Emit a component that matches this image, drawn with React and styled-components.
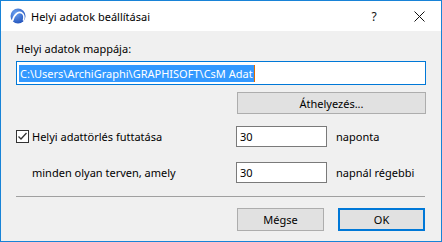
import React from "react";
import styled, { createGlobalStyle } from "styled-components";

const Global = createGlobalStyle`
  html, body { margin: 0; padding: 0; background: #ffffff; }
  * { box-sizing: border-box; }
`;

const font = `"Noto Sans", "Open Sans", sans-serif`;

const Window = styled.div`
  width: 442px;
  height: 242px;
  border: 1px solid #1883d7;
  display: flex;
  flex-direction: column;
  font-family: ${font};
  font-size: 11px;
  color: #000;
  overflow: hidden;
`;

const TitleBar = styled.div`
  height: 30px;
  background: #ffffff;
  display: flex;
  align-items: center;
  padding-left: 9px;
  flex-shrink: 0;
`;

const TitleText = styled.span`
  margin-left: 5px;
  font-size: 11px;
  color: #000;
  flex: 1;
`;

const TitleButton = styled.span`
  width: ${(p) => p.$w}px;
  display: flex;
  justify-content: center;
  align-items: center;
  font-size: 12px;
  color: #111;
`;

const Body = styled.div`
  flex: 1;
  background: #f0f0f0;
  padding: 10px 15px 0 15px;
  display: flex;
  flex-direction: column;
`;

const Label = styled.div`
  line-height: 15px;
  height: 15px;
  color: #000;
`;

const PathBox = styled.div`
  margin-top: 5px;
  height: 24px;
  border: 1px solid #0078d7;
  background: #fff;
  display: flex;
  align-items: center;
  padding-left: 2px;
`;

const Selected = styled.span`
  background: #3399ff;
  color: #fff;
  line-height: 17px;
  height: 17px;
  padding: 0 1px;
  white-space: nowrap;
  border-right: 1px solid #e06a00;
`;

const Button = styled.div`
  width: ${(p) => p.$w}px;
  height: ${(p) => p.$h}px;
  background: #e1e1e1;
  border: ${(p) => (p.$default ? "2px solid #0078d7" : "1px solid #adadad")};
  display: flex;
  align-items: center;
  justify-content: center;
  color: #000;
`;

const RightAlign = styled.div`
  display: flex;
  justify-content: flex-end;
  margin-top: ${(p) => p.$mt}px;
  gap: ${(p) => p.$gap || 0}px;
  padding-right: ${(p) => p.$pr || 0}px;
`;

const Row = styled.div`
  display: grid;
  grid-template-columns: 211px 91px 1fr;
  column-gap: 9px;
  align-items: center;
  height: 21px;
  margin-top: ${(p) => p.$mt}px;
  white-space: nowrap;
`;

const CheckLabel = styled.label`
  display: flex;
  align-items: center;
  gap: 3px;
  padding-left: ${(p) => p.$indent || 0}px;
`;

const Checkbox = styled.span`
  width: 13px;
  height: 13px;
  border: 1px solid #333;
  background: #fff;
  display: flex;
  align-items: center;
  justify-content: center;
`;

const NumBox = styled.div`
  height: 21px;
  border: 1px solid #7a7a7a;
  background: #fff;
  display: flex;
  align-items: center;
  padding-left: 3px;
`;

const Separator = styled.div`
  height: 1px;
  background: #a0a0a0;
  margin-top: 13px;
  margin-right: 1px;
`;

function Logo() {
  return (
    <svg width="16" height="16" viewBox="0 0 16 16">
      <defs>
        <radialGradient id="lg" cx="0.35" cy="0.3" r="0.8">
          <stop offset="0" stopColor="#6aa0f0" />
          <stop offset="1" stopColor="#1f4fb8" />
        </radialGradient>
      </defs>
      <circle cx="8" cy="8" r="7.5" fill="url(#lg)" />
      <path d="M2.5 13 C4 6, 9 2.5, 12.5 5.5 C14 7, 14.2 9.5, 13.5 12" fill="none" stroke="#fff" strokeWidth="1.6" strokeLinecap="round" />
    </svg>
  );
}

export default function App() {
  return (
    <>
      <Global />
      <Window>
        <TitleBar>
          <Logo />
          <TitleText>Helyi adatok beállításai</TitleText>
          <TitleButton $w={16}>?</TitleButton>
          <TitleButton $w={29} />
          <TitleButton $w={16}>
            <svg width="11" height="11" viewBox="0 0 11 11">
              <path d="M0.5 0.5 L10.5 10.5 M10.5 0.5 L0.5 10.5" stroke="#111" strokeWidth="1" />
            </svg>
          </TitleButton>
          <TitleButton $w={14} />
        </TitleBar>
        <Body>
          <Label>Helyi adatok mappája:</Label>
          <PathBox>
            <Selected>C:\Users\ArchiGraphi\GRAPHISOFT\CsM Adat</Selected>
          </PathBox>
          <RightAlign $mt={7}>
            <Button $w={189} $h={22}>Áthelyezés...</Button>
          </RightAlign>
          <Row $mt={12}>
            <CheckLabel>
              <Checkbox>
                <svg width="11" height="11" viewBox="0 0 11 11">
                  <path d="M1.5 5.5 L4 8 L9.5 2" fill="none" stroke="#333" strokeWidth="1.3" />
                </svg>
              </Checkbox>
              Helyi adattörlés futtatása
            </CheckLabel>
            <NumBox>30</NumBox>
            <span>naponta</span>
          </Row>
          <Row $mt={15}>
            <CheckLabel $indent={16}>minden olyan terven, amely</CheckLabel>
            <NumBox>30</NumBox>
            <span>napnál régebbi</span>
          </Row>
          <Separator />
          <RightAlign $mt={11} $gap={14} $pr={1}>
            <Button $w={87} $h={23}>Mégse</Button>
            <Button $w={87} $h={23} $default>OK</Button>
          </RightAlign>
        </Body>
      </Window>
    </>
  );
}
